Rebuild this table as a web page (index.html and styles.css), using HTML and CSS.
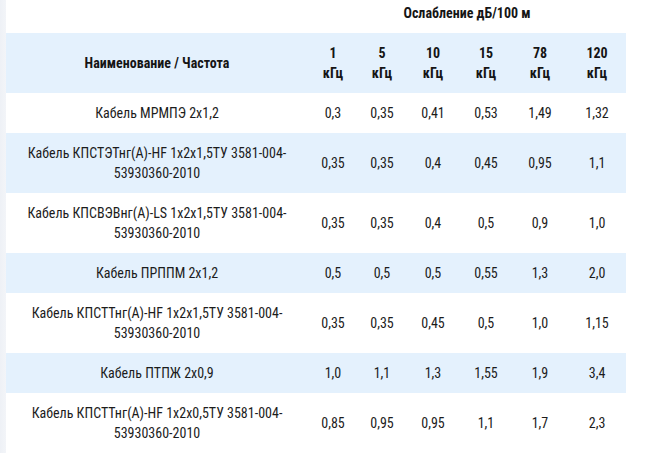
FILE: index.html
```html
<!DOCTYPE html>
<html lang="ru">
<head>
<meta charset="utf-8">
<title>Ослабление</title>
<link rel="stylesheet" href="styles.css">
</head>
<body>
<table class="attn">
  <colgroup>
    <col class="c-name">
    <col class="c-1">
    <col class="c-5">
    <col class="c-10">
    <col class="c-15">
    <col class="c-78">
    <col class="c-120">
  </colgroup>
  <thead>
    <tr class="cap">
      <th></th>
      <th colspan="6">Ослабление дБ/100 м</th>
    </tr>
    <tr class="head">
      <th>Наименование / Частота</th>
      <th>1<br>кГц</th>
      <th>5<br>кГц</th>
      <th>10<br>кГц</th>
      <th>15<br>кГц</th>
      <th>78<br>кГц</th>
      <th>120<br>кГц</th>
    </tr>
  </thead>
  <tbody>
    <tr><td>Кабель МРМПЭ 2х1,2</td><td>0,3</td><td>0,35</td><td>0,41</td><td>0,53</td><td>1,49</td><td>1,32</td></tr>
    <tr><td>Кабель КПСТЭТнг(А)-HF 1х2х1,5ТУ 3581-004-<br>53930360-2010</td><td>0,35</td><td>0,35</td><td>0,4</td><td>0,45</td><td>0,95</td><td>1,1</td></tr>
    <tr><td>Кабель КПСВЭВнг(А)-LS 1х2х1,5ТУ 3581-004-<br>53930360-2010</td><td>0,35</td><td>0,35</td><td>0,4</td><td>0,5</td><td>0,9</td><td>1,0</td></tr>
    <tr><td>Кабель ПРППМ 2х1,2</td><td>0,5</td><td>0,5</td><td>0,5</td><td>0,55</td><td>1,3</td><td>2,0</td></tr>
    <tr><td>Кабель КПСТТнг(А)-HF 1х2х1,5ТУ 3581-004-<br>53930360-2010</td><td>0,35</td><td>0,35</td><td>0,45</td><td>0,5</td><td>1,0</td><td>1,15</td></tr>
    <tr><td>Кабель ПТПЖ 2х0,9</td><td>1,0</td><td>1,1</td><td>1,3</td><td>1,55</td><td>1,9</td><td>3,4</td></tr>
    <tr><td>Кабель КПСТТнг(А)-HF 1х2х0,5ТУ 3581-004-<br>53930360-2010</td><td>0,85</td><td>0,95</td><td>0,95</td><td>1,1</td><td>1,7</td><td>2,3</td></tr>
  </tbody>
</table>
</body>
</html>
```

FILE: styles.css
```css
html, body {
  margin: 0;
  padding: 0;
}

body {
  background: linear-gradient(90deg, #eef1f6 0, #ffffff 22px);
  font-family: Roboto, "Liberation Sans", sans-serif;
  font-stretch: 75%;
  font-size: 14px;
  line-height: 20px;
  color: #1c1c1c;
  overflow: hidden;
}

.attn {
  margin: -7px 0 0 6px;
  width: 620px;
  table-layout: fixed;
  border-collapse: collapse;
  border-spacing: 0;
}

.c-name { width: 302px; }
.c-1 { width: 50px; }
.c-5 { width: 48px; }
.c-10 { width: 54px; }
.c-15 { width: 52px; }
.c-78 { width: 56px; }
.c-120 { width: 58px; }

.attn th,
.attn td {
  padding: 10px 0;
  text-align: center;
  vertical-align: middle;
}

.attn th {
  font-weight: 700;
  color: #151515;
}

.attn .cap th {
  background: #ffffff;
}

.attn .head th {
  background: #e4f1fd;
}

.attn tbody tr {
  background: #ffffff;
}

.attn tbody tr:nth-child(even) {
  background: #e4f1fd;
}
```
